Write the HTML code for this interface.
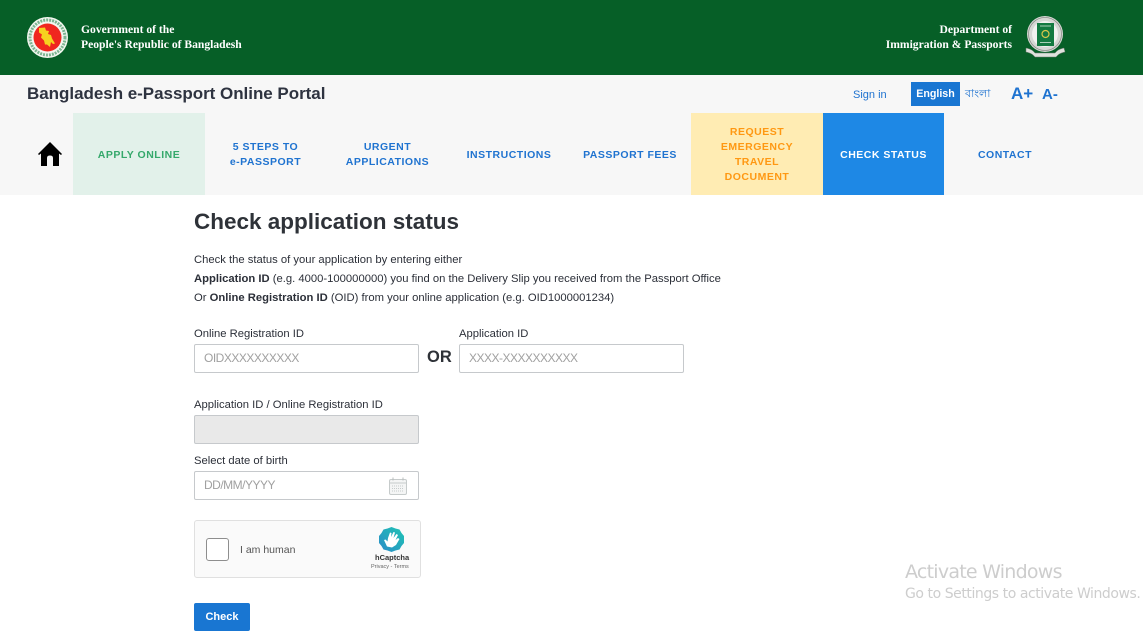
<!DOCTYPE html>
<html><head><meta charset="utf-8">
<style>
*{box-sizing:border-box}
html,body{margin:0;padding:0;width:1143px;height:635px;overflow:hidden;background:#fff;font-family:"Liberation Sans",sans-serif;color:#2b2f38}
.a{position:absolute;white-space:nowrap}
.serif{font-family:"Liberation Serif",serif;font-weight:700;color:#fff;font-size:11.6px;line-height:15px}
.nav{position:absolute;top:113px;height:82px;padding-top:2px;display:flex;align-items:center;justify-content:center;text-align:center;font-size:10.5px;font-weight:700;letter-spacing:.5px;line-height:15px;color:#1f73d0}
.lbl{font-size:11.25px;color:#2b2f38}
.inp{position:absolute;border:1px solid #c6c9cc;border-radius:2px;height:29px;width:225px;background:#fff;font-size:12px;letter-spacing:-.5px;color:#a0a0a0;padding-left:9px;line-height:27px}
</style></head><body>
<div class="a" style="left:0;top:0;width:1143px;height:75px;background:#065f27"></div>
<svg class="a" style="left:27px;top:17px" width="41" height="41" viewBox="0 0 41 41">
<circle cx="20.500" cy="20.500" r="20.500" fill="#f3f7ef"/>
<circle cx="20.500" cy="20.500" r="17.500" fill="none" stroke="#7db592" stroke-width="3" stroke-dasharray="2 1"/>
<circle cx="20.500" cy="20.500" r="14" fill="#f0261f"/>
<path d="M12 11l6-.5 1 3 3 .5-1 3 3 1 1 3.500 3 5-2 .5-2-2-1 5-3-2.500-2 0-1-4-3-3 1-3-3-2z" fill="#f6d21f"/>
</svg>
<div class="a serif" style="left:81px;top:22px">Government of the<br>People's Republic of Bangladesh</div>
<div class="a serif" style="right:131px;top:22px;text-align:right">Department of<br>Immigration &amp; Passports</div>
<svg class="a" style="left:1025px;top:15px" width="41" height="44" viewBox="0 0 41 44">
<path d="M1 33q6 1 9 5h20q3-4 9-5l1 4q-6 1-9 5H10q-3-4-9-5z" fill="#dfe2dd" stroke="#6f7a70" stroke-width=".5"/>
<circle cx="20" cy="19" r="18" fill="#d6d8d4"/>
<circle cx="20" cy="19" r="16.500" fill="none" stroke="#8c8f8a" stroke-width=".8"/>
<circle cx="20" cy="19" r="13" fill="#f1f2ef"/>
<rect x="12" y="8" width="17" height="23" fill="#137a40"/>
<circle cx="20.500" cy="19" r="3.500" fill="none" stroke="#d9c84a" stroke-width="1.200"/>
<path d="M15 11h11M15 27.500h11" stroke="#a9d0b6" stroke-width="1"/>
</svg>
<div class="a" style="left:0;top:75px;width:1143px;height:120px;background:#f7f7f7"></div>
<div class="a" style="left:27px;top:84px;font-size:17px;font-weight:700;line-height:20px;color:#2e3340;letter-spacing:-.03px">Bangladesh e-Passport Online Portal</div>
<div class="a" style="left:853px;top:88px;font-size:11px;line-height:14px;color:#1f73d0">Sign in</div>
<div class="a" style="left:911px;top:82px;width:49px;height:24px;background:#1976d2;color:#fff;font-size:10.700px;font-weight:700;text-align:center;line-height:25px">English</div>
<div class="a" style="left:965px;top:87px;font-size:11px;line-height:15px;color:#1f73d0;font-family:'Liberation Sans','Noto Sans CJK SC',sans-serif">বাংলা</div>
<div class="a" style="left:1011px;top:84px;font-size:17px;font-weight:700;line-height:19px;color:#1f73d0">A+</div>
<div class="a" style="left:1042px;top:86px;font-size:15px;font-weight:700;line-height:18px;color:#1f73d0">A-</div>
<svg class="a" style="left:38px;top:142px" width="24" height="24" viewBox="0 0 24 24"><path d="M12 0L0 12l1 1 2-1.500V24h6V16q0-2.500 3-2.500t3 2.500v8h6V11.500l2 1.500 1-1z" fill="#000"/></svg>
<div class="nav" style="left:73px;width:132px;background:#e2f1ea;color:#35a86b">APPLY ONLINE</div>
<div class="nav" style="left:205px;width:121px">5 STEPS TO<br>e-PASSPORT</div>
<div class="nav" style="left:326px;width:123px">URGENT<br>APPLICATIONS</div>
<div class="nav" style="left:449px;width:120px">INSTRUCTIONS</div>
<div class="nav" style="left:569px;width:122px">PASSPORT FEES</div>
<div class="nav" style="left:691px;width:132px;background:#ffecb3;color:#ff9812">REQUEST<br>EMERGENCY<br>TRAVEL<br>DOCUMENT</div>
<div class="nav" style="left:823px;width:121px;background:#1e88e5;color:#fff">CHECK STATUS</div>
<div class="nav" style="left:944px;width:122px">CONTACT</div>
<div class="a" style="left:194px;top:208px;font-size:22.500px;font-weight:700;line-height:27px;color:#2e3238">Check application status</div>
<div class="a lbl" style="left:194px;top:253px;line-height:14px">Check the status of your application by entering either</div>
<div class="a lbl" style="left:194px;top:272px;line-height:14px"><b>Application ID</b> (e.g. 4000-100000000) you find on the Delivery Slip you received from the Passport Office</div>
<div class="a lbl" style="left:194px;top:291px;line-height:14px">Or <b>Online Registration ID</b> (OID) from your online application (e.g. OID1000001234)</div>
<div class="a lbl" style="left:194px;top:327px;line-height:14px">Online Registration ID</div>
<div class="a lbl" style="left:459px;top:327px;line-height:14px">Application ID</div>
<div class="inp" style="left:194px;top:344px">OIDXXXXXXXXXX</div>
<div class="a" style="left:427px;top:347px;font-size:16.500px;font-weight:700;line-height:20px;color:#2e3238">OR</div>
<div class="inp" style="left:459px;top:344px">XXXX-XXXXXXXXXX</div>
<div class="a lbl" style="left:194px;top:398px;line-height:14px">Application ID / Online Registration ID</div>
<div class="inp" style="left:194px;top:415px;background:#e9e9e9"></div>
<div class="a lbl" style="left:194px;top:454px;line-height:14px">Select date of birth</div>
<div class="inp" style="left:194px;top:471px">DD/MM/YYYY</div>
<svg class="a" style="left:389px;top:477px" width="18" height="18" viewBox="0 0 18 18"><rect x=".5" y="2.500" width="17" height="15" rx="1.500" fill="#f4f5f5" stroke="#c6cbcb"/><path d="M1 6h16" stroke="#c6cbcb"/><path d="M4 .5v3M14 .5v3" stroke="#b8bcbc"/><path d="M3 9h12M3 11.500h12M3 14h12" stroke="#c6cbcb" stroke-dasharray="1 1"/></svg>
<div class="a" style="left:194px;top:520px;width:227px;height:58px;background:#fafafa;border:1px solid #e0e0e0;border-radius:3px"></div>
<div class="a" style="left:206px;top:538px;width:23px;height:23px;background:#fff;border:1px solid #8e8e8e;border-radius:3px"></div>
<div class="a" style="left:240px;top:544px;font-size:10.500px;line-height:13px;color:#555">I am human</div>
<svg class="a" style="left:379px;top:527px" width="25" height="25" viewBox="0 0 25 25">
<defs><linearGradient id="h" x1="1" y1="0" x2="0" y2="1"><stop offset="0" stop-color="#1fc4b4"/><stop offset="1" stop-color="#2a8cc8"/></linearGradient></defs>
<path d="M12.500 0l4 1.500 4 1 2 3.500 2.500 3v7l-2.500 3-2 3.500-4 1-4 1.500-4-1.500-4-1-2-3.500L0 16V9l2.500-3 2-3.500 4-1z" fill="url(#h)"/>
<path d="M5 13l3 6.500 5 1 4-2.500 3.500-6-1.500-1-2.500 2 2.500-5-1.500-1-3 4 1.500-5.500-1.500-.5-2.500 5 .5-4-1.500-.5-2 5.500-.5 3.500-2-2z" fill="#fff"/>
</svg>
<div class="a" style="left:375px;top:553px;font-size:7.500px;font-weight:700;line-height:10px;color:#333">hCaptcha</div>
<div class="a" style="left:371px;top:563px;font-size:5.500px;line-height:8px;color:#666">Privacy - Terms</div>
<div class="a" style="left:194px;top:603px;width:56px;height:28px;background:#1976d2;border-radius:2px;color:#fff;font-size:11px;font-weight:700;text-align:center;line-height:29px">Check</div>
<div class="a" style="left:905px;top:560px;font-size:19px;line-height:24px;color:#cdcdcd;font-family:'DejaVu Sans',sans-serif;letter-spacing:-.75px">Activate Windows</div>
<div class="a" style="left:905px;top:586px;font-size:14px;line-height:17px;color:#cdcdcd;font-family:'DejaVu Sans',sans-serif;letter-spacing:-.44px">Go to Settings to activate Windows.</div>
</body></html>
